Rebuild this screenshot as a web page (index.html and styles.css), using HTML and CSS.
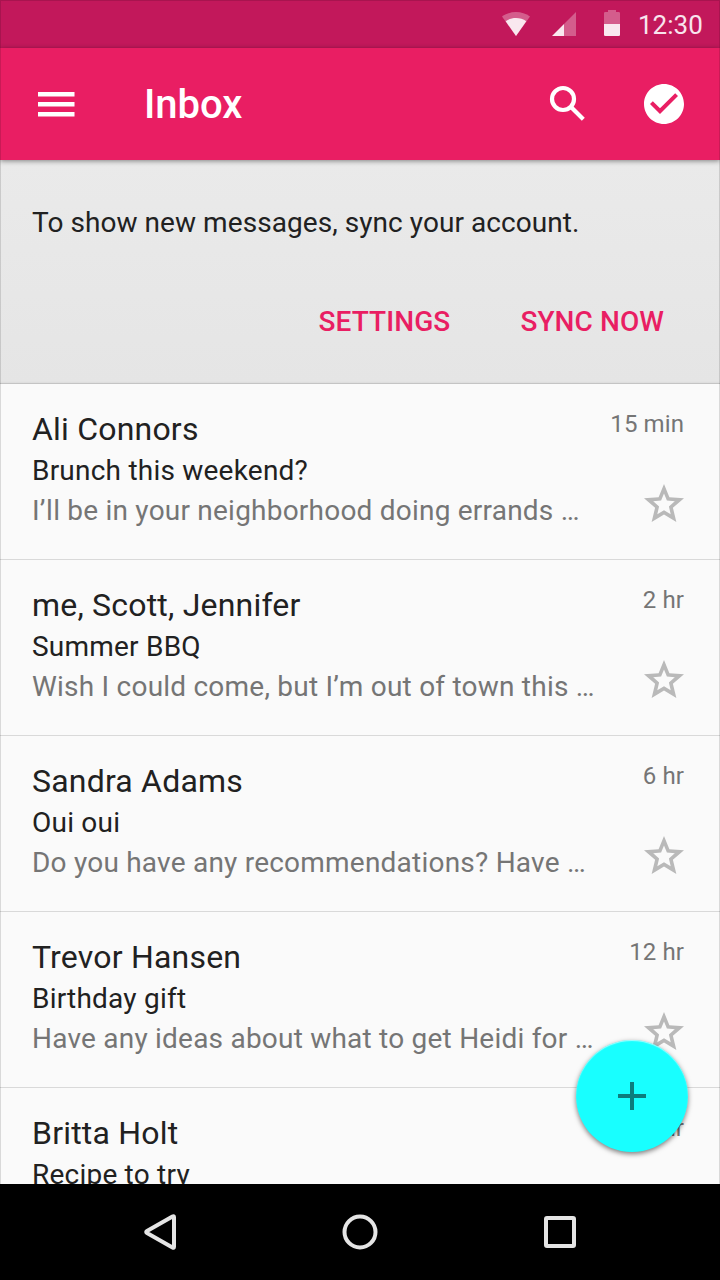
FILE: index.html
```html
<!DOCTYPE html>
<html lang="en">
<head>
<meta charset="utf-8">
<title>Inbox</title>
<link rel="stylesheet" href="styles.css">
</head>
<body>
<div class="screen">
  <header class="status-bar">
    <svg class="wifi" viewBox="0 0 28 24"><path d="M0 4.6C8-1.4 20-1.4 28 4.6L14 24z" fill="#fff" fill-opacity=".3"/><path d="M3.700 9.200C9.500 5 18.500 5 24.300 9.200L14 24z" fill="#fff" fill-opacity=".86"/></svg>
    <svg class="signal" viewBox="0 0 24 24"><path d="M12 12L24 0V24H12z" fill="#fff" fill-opacity=".3"/><path d="M0 24L12 12V24z" fill="#fff" fill-opacity=".9"/></svg>
    <svg class="battery" viewBox="0 0 16 26"><path d="M0 14V3.3Q0 2 1.3 2H4V0H12V2H14.700Q16 2 16 3.300V14z" fill="#fff" fill-opacity=".3"/><path d="M0 14H16V24.700Q16 26 14.700 26H1.300Q0 26 0 24.700z" fill="#fff" fill-opacity=".9"/></svg>
    <span class="clock">12:30</span>
  </header>
  <div class="app-bar">
    <svg class="icon menu" viewBox="0 0 48 48"><path d="M6 12H42.500V16.500H6zM6 22H42.500V26.500H6zM6 32H42.500V36.500H6z"/></svg>
    <h1 class="title">Inbox</h1>
    <svg class="icon search" viewBox="0 0 48 48"><circle cx="19" cy="19" r="11"/><path d="M27 27L39.300 39.300"/></svg>
    <svg class="icon done" viewBox="0 0 24 24"><path d="M12 2C6.480 2 2 6.480 2 12s4.480 10 10 10 10-4.480 10-10S17.520 2 12 2zm-2 15l-5-5 1.410-1.410L10 14.170l7.590-7.590L19 8l-9 9z"/></svg>
  </div>
  <section class="banner">
    <p class="banner-text">To show new messages, sync your account.</p>
    <div class="actions"><span class="action settings">SETTINGS</span><span class="action sync">SYNC NOW</span></div>
  </section>
  <main class="list">
    <svg class="defs"><symbol id="star" viewBox="0 0 24 24"><path d="M22 9.100l-7.300-.5L12 2 9.300 8.600 2 9.100l5.560 4.730L5.820 21 12 17.270 18.180 21l-1.740-7.170L22 9.100zM12 15.100l-3.350 2 .9-3.900-2.950-2.600 3.950-.34L12 6.700l1.450 3.560 3.950.34-2.950 2.600.9 3.900L12 15.100z"/></symbol></svg>
    <article class="row">
      <div class="mail"><h2 class="name">Ali Connors</h2><p class="subject">Brunch this weekend?</p><p class="snippet">I’ll be in your neighborhood doing errands …</p></div>
      <div class="meta"><span class="time">15 min</span><svg class="star"><use href="#star"/></svg></div>
    </article>
    <article class="row">
      <div class="mail"><h2 class="name">me, Scott, Jennifer</h2><p class="subject">Summer BBQ</p><p class="snippet">Wish I could come, but I’m out of town this …</p></div>
      <div class="meta"><span class="time">2 hr</span><svg class="star"><use href="#star"/></svg></div>
    </article>
    <article class="row">
      <div class="mail"><h2 class="name">Sandra Adams</h2><p class="subject">Oui oui</p><p class="snippet">Do you have any recommendations? Have …</p></div>
      <div class="meta"><span class="time">6 hr</span><svg class="star"><use href="#star"/></svg></div>
    </article>
    <article class="row">
      <div class="mail"><h2 class="name">Trevor Hansen</h2><p class="subject">Birthday gift</p><p class="snippet">Have any ideas about what to get Heidi for …</p></div>
      <div class="meta"><span class="time">12 hr</span><svg class="star"><use href="#star"/></svg></div>
    </article>
    <article class="row">
      <div class="mail"><h2 class="name">Britta Holt</h2><p class="subject">Recipe to try</p></div>
      <div class="meta"><span class="time">18 hr</span></div>
    </article>
  </main>
  <div class="edge"></div>
  <div class="fab"><svg class="plus" viewBox="0 0 28 28"><path d="M12 0H16V12H28V16H16V28H12V16H0V12H12z"/></svg></div>
  <nav class="nav-bar">
    <svg class="nav-icon" viewBox="0 0 48 48"><path d="M36.500 8.400Q38 7.600 38 9.200V38.800Q38 40.400 36.500 39.600L11 25Q9.400 24 11 23z"/></svg>
    <svg class="nav-icon" viewBox="0 0 48 48"><circle cx="24" cy="24" r="15.500"/></svg>
    <svg class="nav-icon" viewBox="0 0 48 48"><rect x="10" y="10" width="28" height="28" rx="1"/></svg>
  </nav>
</div>
</body>
</html>
```
FILE: styles.css
```css
* { box-sizing: border-box; margin: 0; padding: 0; }
body { font-family: Roboto, sans-serif; color: #212121; background: #fafafa; }
.screen { position: relative; width: 720px; height: 1280px; display: flex; flex-direction: column; overflow: hidden; }
.status-bar { flex: none; height: 48px; background: #c2185b; display: flex; align-items: flex-start; padding-left: 502px; }
.wifi { width: 28px; height: 24px; margin-top: 12px; }
.signal { width: 24px; height: 24px; margin: 12px 0 0 22px; }
.battery { width: 16px; height: 26px; margin: 10px 0 0 28px; }
.clock { margin-left: 18px; font-size: 26px; line-height: 50px; color: #f8e4ed; white-space: nowrap; }
.app-bar { flex: none; position: relative; z-index: 1; height: 112px; background: #e91e63; display: flex; align-items: center; padding: 0 32px; box-shadow: 0 1px 5px rgba(0,0,0,.45); }
.icon { width: 48px; height: 48px; fill: #fff; flex: none; }
.search { fill: none; stroke: #fff; stroke-width: 4.2; }
.title { margin-left: 64px; font-size: 40px; font-weight: 500; color: #fff; flex: 1; line-height: 48px; padding-top: 2px; }
.done { margin-left: 48px; }
.banner { flex: none; height: 224px; padding: 39px 56px 0 32px; background: linear-gradient(#eaeaea, #e5e5e5); box-shadow: inset 0 -1px 0 #c4c4c4, inset 0 -3px 2px -1px #dcdcdc; display: flex; flex-direction: column; gap: 51px; }
.banner-text { font-size: 28px; line-height: 48px; white-space: nowrap; letter-spacing: .06px; }
.actions { display: flex; justify-content: flex-end; gap: 70px; font-size: 28px; font-weight: 500; line-height: 48px; color: #e91e63; letter-spacing: .08px; }
.list { flex: 1; min-height: 0; overflow: hidden; background: #fafafa; }
.defs { display: none; }
.row { height: 176px; display: flex; justify-content: space-between; padding: 24px 36px 0 32px; border-bottom: 1px solid #d9d9d9; white-space: nowrap; }
.name { font-size: 32px; font-weight: 400; line-height: 42px; letter-spacing: .2px; }
.subject, .snippet { position: relative; top: 1px; font-size: 28px; line-height: 40px; letter-spacing: .22px; }
.snippet { color: #757575; }
.meta { display: flex; flex-direction: column; align-items: flex-end; }
.time { font-size: 24px; line-height: 32px; color: #757575; letter-spacing: .1px; }
.star { width: 48px; height: 48px; margin: 40px -4px 0 0; fill: #b9b9b9; }
.edge { position: absolute; inset: 0; border: 1px solid rgba(0,0,0,.13); border-bottom: 0; z-index: 2; }
.fab { position: absolute; z-index: 3; right: 32px; bottom: 128px; width: 112px; height: 112px; border-radius: 50%; background: #18ffff; display: flex; align-items: center; justify-content: center; box-shadow: 0 2px 5px rgba(0,0,0,.5), inset 0 1px 1px rgba(255,255,255,.6); }
.plus { width: 28px; height: 28px; fill: #0c7d7d; }
.nav-bar { flex: none; position: relative; z-index: 4; height: 96px; background: #000; display: flex; justify-content: center; align-items: center; gap: 152px; }
.nav-icon { width: 48px; height: 48px; fill: none; stroke: #e5e5e5; stroke-width: 4; stroke-linejoin: round; }
```
